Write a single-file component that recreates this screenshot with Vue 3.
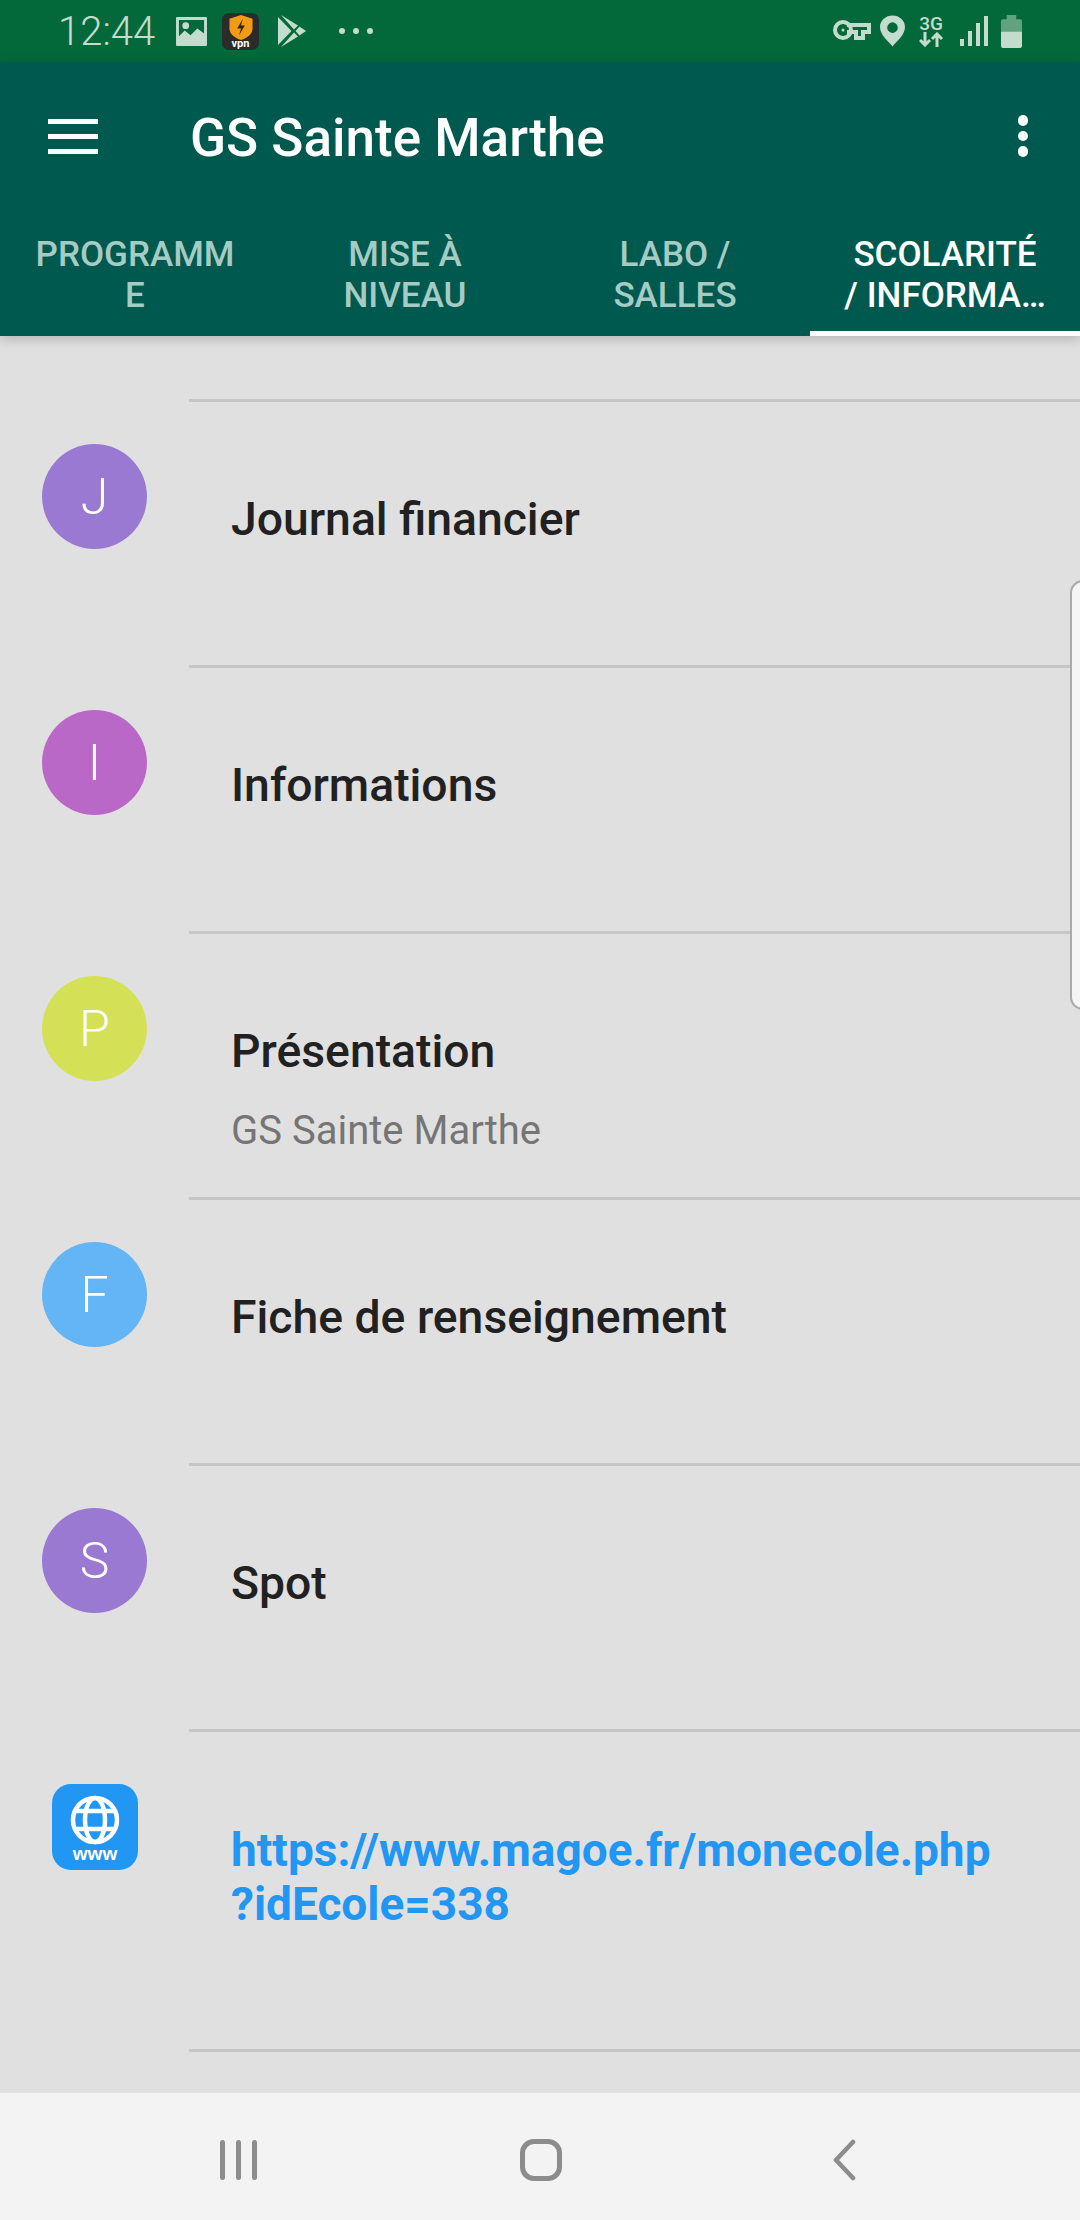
<script setup>
const tabs = [
  { lines: ['PROGRAMM', 'E'] },
  { lines: ['MISE À', 'NIVEAU'] },
  { lines: ['LABO /', 'SALLES'] },
  { lines: ['SCOLARITÉ', '/ INFORMA…'], active: true },
]

const rows = [
  { letter: 'J', color: '#9a79d2', title: 'Journal financier' },
  { letter: 'I', color: '#ba68c8', title: 'Informations' },
  { letter: 'P', color: '#d4e157', title: 'Présentation', sub: 'GS Sainte Marthe' },
  { letter: 'F', color: '#64b5f6', title: 'Fiche de renseignement' },
  { letter: 'S', color: '#9a79d2', title: 'Spot' },
]
</script>

<template>
  <div class="phone">
    <div class="status">
      <span class="time">12:44</span>
      <svg class="st-img" width="31" height="29" viewBox="0 0 32 30">
        <path fill="#c3dccd" fill-rule="evenodd" d="M1 0h30a1 1 0 0 1 1 1v28a1 1 0 0 1-1 1H1a1 1 0 0 1-1-1V1a1 1 0 0 1 1-1zM3 3v17l6-6 6 5 7-7 7 5V3z" />
        <circle cx="10" cy="9" r="3.500" fill="#c3dccd" />
      </svg>
      <div class="vpn">
        <svg width="26" height="25" viewBox="0 0 26 26">
          <path fill="#f39a16" d="M13 0l12 4v10c0 6-6 10-12 12C7 24 1 20 1 14V4z" />
          <path fill="#33291a" d="M15 4l-6 10h4l-2 7 6-10h-4z" />
        </svg>
        <span class="vpn-text">vpn</span>
      </div>
      <svg class="st-play" width="28" height="32" viewBox="0 0 28 32">
        <path fill="#c3dccd" d="M0 2l13.500 14L0 30zM3 0l17 10.500-4 4zM3 32l17-10.500-4-4zM21.500 11.500L28 16l-6.500 4.500-4-4.500z" />
      </svg>
      <div class="st-dots"><i></i><i></i><i></i></div>

      <div class="st-right">
        <svg class="st-key" width="38" height="22" viewBox="0 0 38 22">
          <path fill="none" stroke="#c3dccd" stroke-width="4" d="M14 5h22v7h-6v6h-7v-6h-9" />
          <circle cx="10" cy="10" r="8" fill="none" stroke="#c3dccd" stroke-width="4" />
          <circle cx="10" cy="10" r="1.500" fill="#c3dccd" />
        </svg>
        <svg class="st-pin" width="25" height="32" viewBox="0 0 26 32">
          <path fill="#c3dccd" fill-rule="evenodd" d="M13 0c7 0 13 5 13 12 0 8-9 15-13 20C9 27 0 20 0 12 0 5 6 0 13 0zm0 7a5.500 5.500 0 1 0 0 11 5.500 5.500 0 0 0 0-11z" />
        </svg>
        <div class="net">
          <span>3G</span>
          <svg width="24" height="15" viewBox="0 0 24 15">
            <path fill="none" stroke="#c3dccd" stroke-width="3" d="M6 0v13M1 8l5 5 5-5M18 15V2M13 7l5-5 5 5" />
          </svg>
        </div>
        <div class="bars"><i style="height: 7px"></i><i style="height: 15px"></i><i style="height: 23px"></i><i style="height: 30px"></i></div>
        <svg width="21" height="33" viewBox="0 0 22 32" preserveAspectRatio="none">
          <path fill="#5fa37f" d="M6 0h10v4h4a2 2 0 0 1 2 2v10H0V6a2 2 0 0 1 2-2h4z" />
          <path fill="#c3dccd" d="M0 16h22v14a2 2 0 0 1-2 2H2a2 2 0 0 1-2-2z" />
        </svg>
      </div>
    </div>

    <div class="appbar">
      <div class="toolbar">
        <div class="menu"><i></i><i></i><i></i></div>
        <div class="title">GS Sainte Marthe</div>
        <div class="more"><i></i><i></i><i></i></div>
      </div>
      <div class="tabs">
        <div v-for="tab in tabs" :key="tab.lines[0]" class="tab" :class="{ active: tab.active }">
          <span v-for="line in tab.lines" :key="line">{{ line }}</span>
        </div>
      </div>
    </div>

    <div class="content">
      <div class="divider first"></div>
      <div v-for="row in rows" :key="row.title" class="row">
        <div class="avatar-col">
          <div class="avatar" :style="{ background: row.color }">{{ row.letter }}</div>
        </div>
        <div class="row-main">
          <div class="row-title">{{ row.title }}</div>
          <div v-if="row.sub" class="row-sub">{{ row.sub }}</div>
        </div>
      </div>
      <div class="row link-row">
        <div class="avatar-col">
          <div class="www">
            <svg width="50" height="50" viewBox="0 0 50 50">
              <g fill="none" stroke="#fff" stroke-width="4.500">
                <circle cx="25" cy="25" r="22" />
                <ellipse cx="25" cy="25" rx="10" ry="22" />
                <path d="M5 16h40M5 34h40" />
              </g>
            </svg>
            <span>www</span>
          </div>
        </div>
        <div class="link">https://www.magoe.fr/monecole.php<br />?idEcole=338</div>
      </div>
      <div class="handle"></div>
    </div>

    <div class="navbar">
      <div class="nav-recent"><i></i><i></i><i></i></div>
      <div class="nav-home"></div>
      <svg width="24" height="42" viewBox="0 0 24 42">
        <path fill="none" stroke="#8c8c8c" stroke-width="4.500" stroke-linecap="round" stroke-linejoin="round" d="M21 3L4 21l17 18" />
      </svg>
    </div>
  </div>
</template>

<style scoped>
.phone {
  position: relative;
  width: 1080px;
  height: 2220px;
  display: flex;
  flex-direction: column;
  overflow: hidden;
  background: #e0e0e0;
  font-family: Roboto, "Liberation Sans", sans-serif;
}
.status {
  height: 62px;
  flex: none;
  display: flex;
  align-items: center;
  padding-left: 58px;
  background: #03693a;
  color: #c3dccd;
}
.time {
  font-size: 40px;
  font-weight: 300;
  width: 118px;
}
.vpn {
  width: 37px;
  height: 37px;
  margin-left: 15px;
  border-radius: 7px;
  background: #2b2b2b;
  display: flex;
  flex-direction: column;
  align-items: center;
  padding-top: 2px;
  box-sizing: border-box;
}
.vpn-text {
  font-size: 11px;
  line-height: 8px;
  font-weight: 700;
  color: #fff;
}
.st-play {
  margin-left: 19px;
}
.st-dots {
  display: flex;
  gap: 8px;
  margin-left: 33px;
}
.st-dots i {
  width: 6px;
  height: 6px;
  border-radius: 50%;
  background: #c3dccd;
}
.st-right {
  margin-left: auto;
  margin-right: 58px;
  display: flex;
  align-items: center;
}
.st-pin {
  margin-left: 9px;
}
.net {
  width: 26px;
  margin-left: 13px;
  display: flex;
  flex-direction: column;
  align-items: center;
}
.net span {
  font-size: 19px;
  line-height: 17px;
  font-weight: 500;
}
.bars {
  display: flex;
  align-items: flex-end;
  gap: 4px;
  height: 30px;
  margin-left: 16px;
  margin-right: 13px;
}
.bars i {
  width: 4px;
  background: #c3dccd;
}
.appbar {
  height: 274px;
  flex: none;
  position: relative;
  z-index: 1;
  display: flex;
  flex-direction: column;
  background: #00594e;
  box-shadow: 0 3px 12px rgba(0, 0, 0, 0.2);
}
.toolbar {
  height: 160px;
  flex: none;
  box-sizing: border-box;
  display: flex;
  align-items: center;
  padding: 0 52px 12px 48px;
}
.menu {
  display: flex;
  flex-direction: column;
  gap: 10px;
  width: 50px;
}
.menu i {
  height: 5px;
  background: #fff;
}
.title {
  flex: 1;
  margin: 4px 0 0 92px;
  font-size: 53px;
  font-weight: 500;
  color: #fff;
}
.more {
  display: flex;
  flex-direction: column;
  gap: 5px;
}
.more i {
  width: 10.500px;
  height: 10.500px;
  border-radius: 50%;
  background: #fff;
}
.tabs {
  display: flex;
  flex: 1;
}
.tab {
  width: 270px;
  display: flex;
  flex-direction: column;
  align-items: center;
  padding-top: 12px;
  box-sizing: border-box;
  font-size: 35px;
  line-height: 41px;
  font-weight: 500;
  color: #a5cbc4;
}
.tab.active {
  color: #fff;
  border-bottom: 5px solid #fff;
}
.content {
  flex: 1;
  position: relative;
}
.divider.first {
  height: 3px;
  margin: 63px 0 0 189px;
  background: #c6c6c6;
}
.row {
  height: 266px;
  box-sizing: border-box;
  display: flex;
  border-bottom: 3px solid #c6c6c6;
}
.avatar-col {
  width: 189px;
  flex: none;
  padding: 42px 0 0 42px;
  box-sizing: border-box;
  background: #e0e0e0;
  margin-bottom: -3px;
}
.avatar {
  width: 105px;
  height: 105px;
  border-radius: 50%;
  display: flex;
  align-items: center;
  justify-content: center;
  font-size: 50px;
  font-weight: 300;
  color: #fff;
}
.row-main {
  padding: 88px 0 0 42px;
}
.row-title {
  font-size: 46.300px;
  line-height: 58px;
  font-weight: 500;
  color: #212121;
}
.row-sub {
  margin-top: 26px;
  font-size: 40px;
  line-height: 50px;
  color: #757575;
}
.link-row {
  height: 320px;
}
.www {
  width: 86px;
  height: 86px;
  margin: 10px 0 0 10px;
  border-radius: 19px;
  background: #2196f3;
  display: flex;
  flex-direction: column;
  align-items: center;
  padding-top: 11px;
  box-sizing: border-box;
  color: #fff;
}
.www span {
  font-size: 19px;
  line-height: 17px;
  font-weight: 700;
  font-family: "Liberation Sans", sans-serif;
}
.link {
  padding: 91px 0 0 42px;
  font-size: 46px;
  line-height: 54px;
  font-weight: 700;
  color: #2196f3;
}
.handle {
  position: absolute;
  top: 244px;
  left: 1070px;
  width: 22px;
  height: 426px;
  border: 2px solid #aaa;
  border-radius: 14px;
  background: #f5f5f5;
}
.navbar {
  height: 127px;
  flex: none;
  display: flex;
  align-items: center;
  background: #f3f3f3;
  position: relative;
}
.nav-recent {
  position: absolute;
  top: 47px;
  left: 220px;
  display: flex;
  gap: 11px;
}
.nav-recent i {
  width: 5px;
  height: 40px;
  border-radius: 3px;
  background: #8c8c8c;
}
.nav-home {
  position: absolute;
  top: 46px;
  left: 520px;
  width: 42px;
  height: 42px;
  border: 5px solid #8c8c8c;
  border-radius: 14px;
  box-sizing: border-box;
}
.navbar svg {
  position: absolute;
  top: 46px;
  left: 832px;
}
</style>
